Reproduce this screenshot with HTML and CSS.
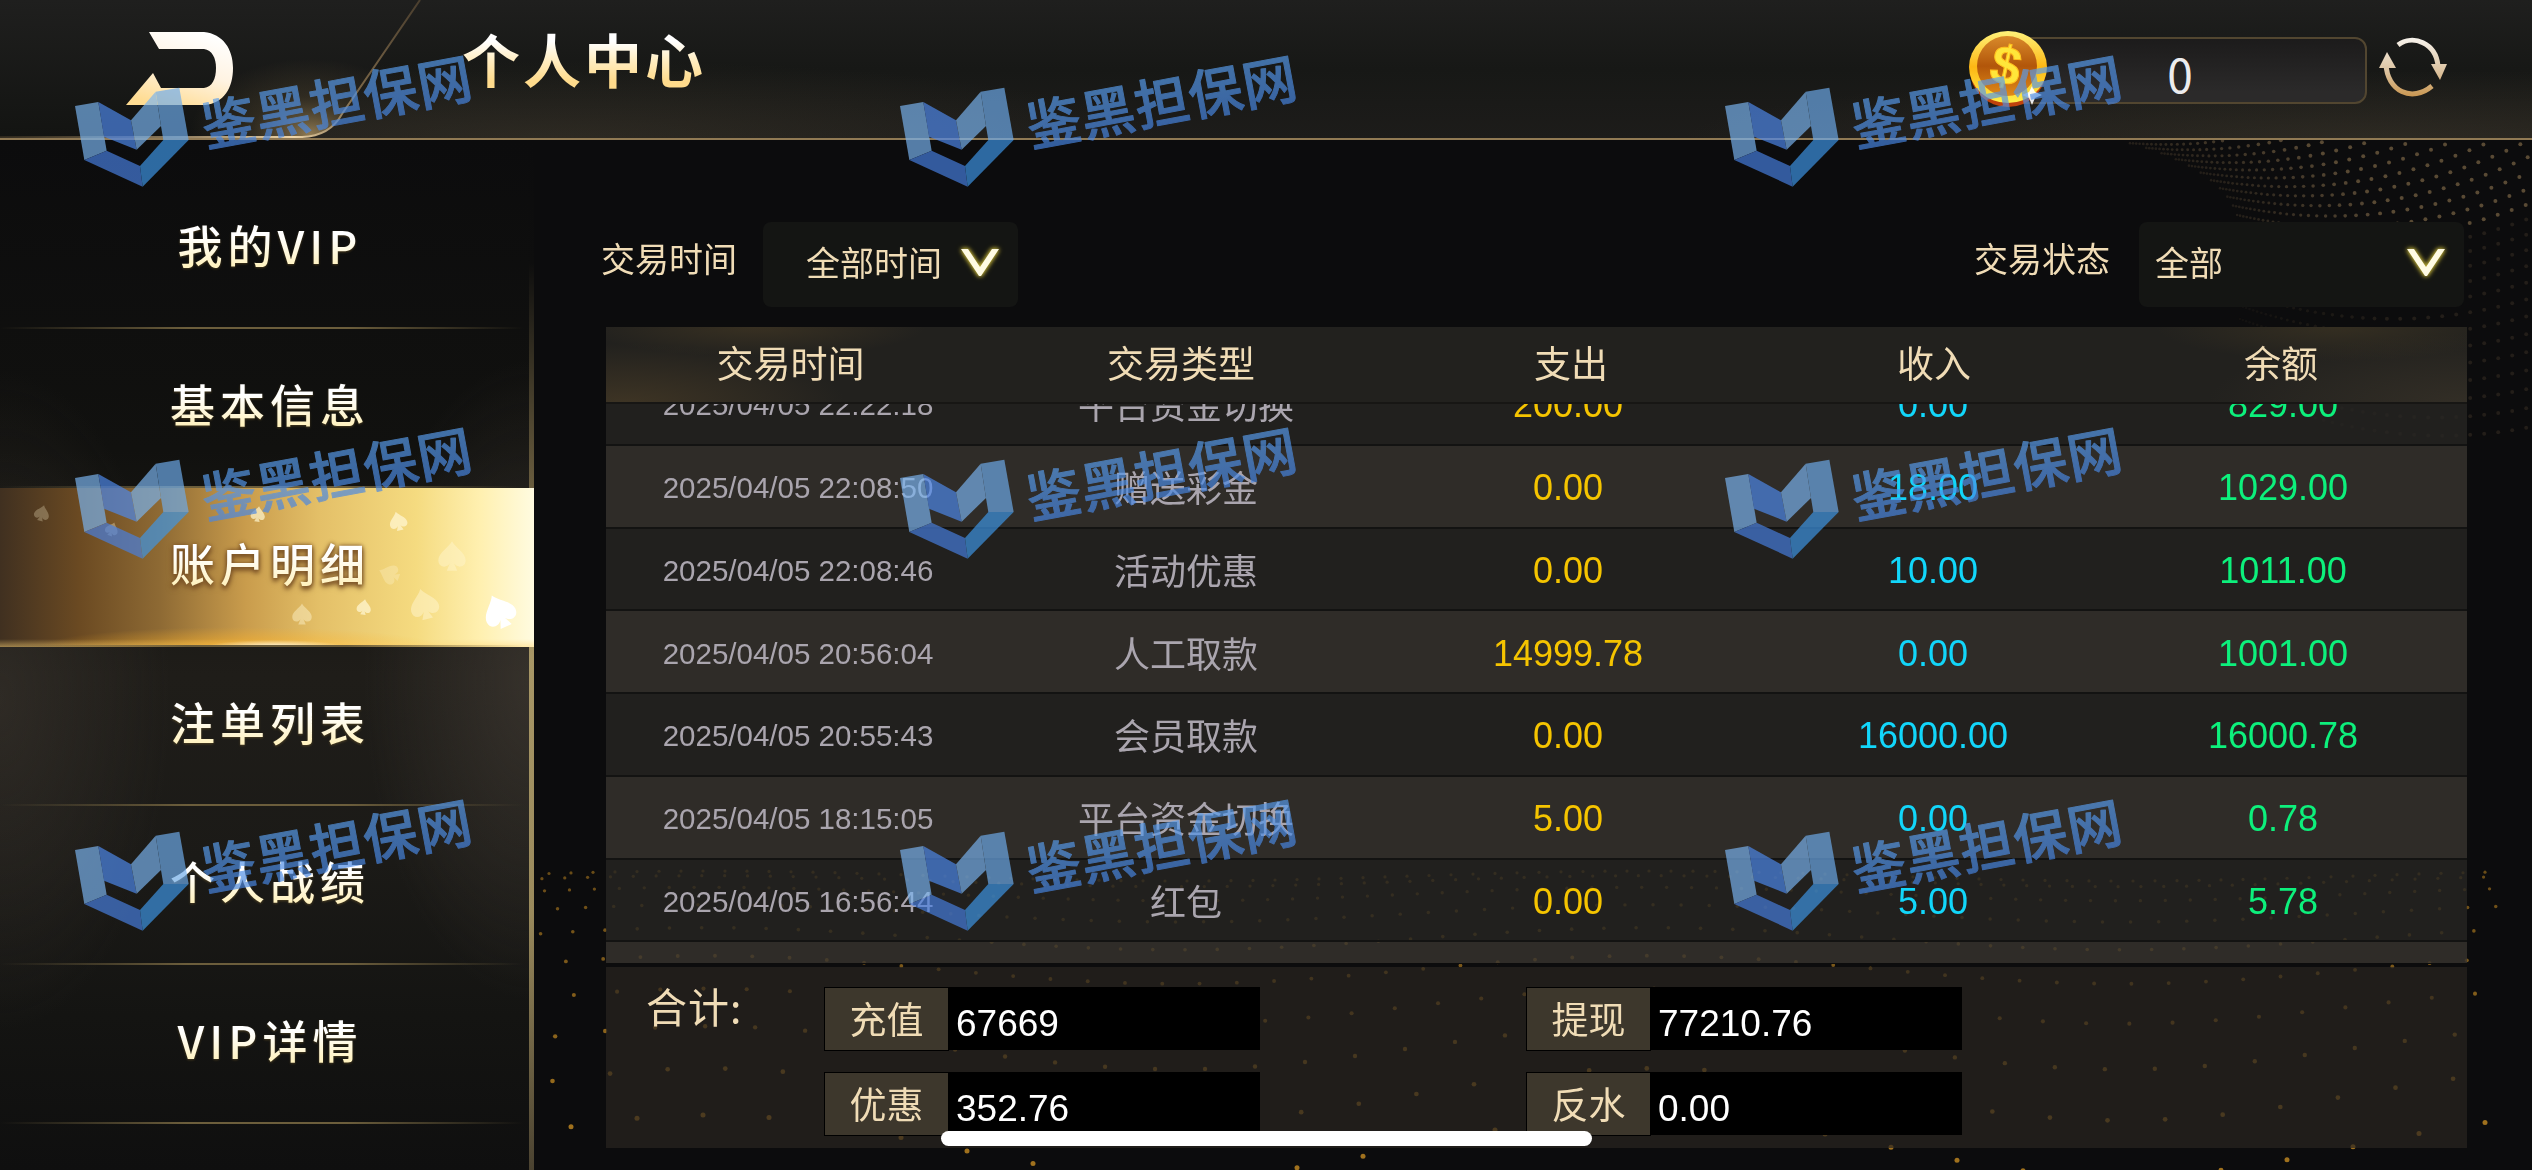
FILE: index.html
```html
<!DOCTYPE html>
<html lang="zh-CN">
<head>
  <meta charset="UTF-8" />
  <meta name="viewport" content="width=device-width, initial-scale=1" />
  <title>个人中心</title>
  <link rel="stylesheet" href="styles.css">
</head>
<body>
  <canvas id="particles" class="particles" width="2532" height="1170"></canvas>

  <header class="header">
    <svg class="header-tab" width="440" height="140" viewBox="0 0 440 140">
      <defs>
        <linearGradient id="tabFill" x1="0" y1="0" x2="0" y2="1">
          <stop offset="0" stop-color="#1f1f1e" />
          <stop offset="1" stop-color="#131412" />
        </linearGradient>
        <linearGradient id="tabLine" x1="0" y1="0" x2="1" y2="0">
          <stop offset="0" stop-color="#6b5636" stop-opacity="0.3" />
          <stop offset="0.7" stop-color="#f0d6a8" />
          <stop offset="0.85" stop-color="#7b6748" />
          <stop offset="1" stop-color="#4a3e2e" />
        </linearGradient>
        <radialGradient id="tabGlow" gradientUnits="userSpaceOnUse" cx="310" cy="134" r="120" gradientTransform="translate(0 50) scale(1 0.63)">
          <stop offset="0" stop-color="#b99c68" stop-opacity="0.75" />
          <stop offset="0.5" stop-color="#6b5a3c" stop-opacity="0.3" />
          <stop offset="1" stop-color="#6b5a3c" stop-opacity="0" />
        </radialGradient>
      </defs>
      <path d="M0 0H420L342 114Q330 136 302 137H0Z" fill="url(#tabFill)" />
      <path d="M0 0H420L342 114Q330 136 302 137H0Z" fill="url(#tabGlow)" />
      <path d="M420 0L342 114Q330 136 302 137H0" fill="none" stroke="url(#tabLine)" stroke-width="2" />
    </svg>
    <button class="back" aria-label="返回">
      <svg width="108" height="74" viewBox="0 0 108 74">
        <defs>
          <linearGradient id="backFill" x1="0.7" y1="0" x2="0.3" y2="1">
            <stop offset="0" stop-color="#ffffff" />
            <stop offset="0.5" stop-color="#fff3e2" />
            <stop offset="1" stop-color="#ffdc92" />
          </linearGradient>
        </defs>
        <path d="M23 0H78C97 2 107 17 107 36C107 56 98 71 79 73H0L27 41L35 56H78C86 55 90 47 90 36C90 26 86 18 78 17H33Z" fill="url(#backFill)" />
      </svg>
    </button>
    <h1 class="title">个人中心</h1>
    <div class="wallet">
      <svg class="coin" width="80" height="78" viewBox="0 0 80 78">
        <defs>
          <linearGradient id="coinRim" x1="0" y1="0" x2="0" y2="1">
            <stop offset="0" stop-color="#fff27a" />
            <stop offset="0.5" stop-color="#fdb714" />
            <stop offset="1" stop-color="#fff04a" />
          </linearGradient>
          <linearGradient id="coinFace" x1="0" y1="0" x2="0" y2="1">
            <stop offset="0" stop-color="#d98a2a" />
            <stop offset="0.5" stop-color="#b2560a" />
            <stop offset="1" stop-color="#e08a18" />
          </linearGradient>
        </defs>
        <ellipse cx="40" cy="40" rx="38" ry="37" fill="#c0420c" />
        <ellipse cx="40" cy="37" rx="39" ry="36" fill="url(#coinRim)" />
        <circle cx="39" cy="36" r="30" fill="url(#coinFace)" />
        <text class="coin-sign" x="38" y="54" transform="rotate(12 38 36)">$</text>
        <path d="M64 56L67 62L74 65L67 68L64 75L61 68L54 65L61 62Z" fill="#fff" opacity="0.9" />
      </svg>
      <span class="amount">0</span>
    </div>
    <button class="refresh" aria-label="刷新">
      <svg width="68" height="62" viewBox="0 0 68 62">
        <defs>
          <linearGradient id="refreshFill" gradientUnits="userSpaceOnUse" x1="0" y1="0" x2="0" y2="62">
            <stop offset="0" stop-color="#f8f4ee" />
            <stop offset="0.55" stop-color="#dcc3a0" />
            <stop offset="1" stop-color="#c8934a" />
          </linearGradient>
        </defs>
        <path d="M19 8C34 -3 57 6 59 29" fill="none" stroke="url(#refreshFill)" stroke-width="5" />
        <path d="M7 27C8 54 33 66 53 49" fill="none" stroke="url(#refreshFill)" stroke-width="5" />
        <path d="M52 27H68L61 43ZM0 31H17L8 15Z" fill="url(#refreshFill)" />
      </svg>
    </button>
  </header>

  <main class="main">
    <nav class="sidebar">
      <a class="nav-item"><span>我的VIP</span></a>
      <a class="nav-item"><span>基本信息</span></a>
      <a class="nav-item active">
        <svg class="spades" width="534" height="157" viewBox="0 0 534 157">
          <defs>
            <path id="spade" d="M0 -14C3 -8 13 -3 13 4C13 11 5 12 2 7L5 14H-5L-2 7C-5 12 -13 11 -13 4C-13 -3 -3 -8 0 -14Z" />
          </defs>
          <g fill="#fff6d0">
            <use href="#spade" transform="translate(42 25) rotate(15) scale(0.58)" opacity="0.28" />
            <use href="#spade" transform="translate(112 41) rotate(20) scale(0.5)" opacity="0.35" />
            <use href="#spade" transform="translate(258 26) rotate(8) scale(0.55)" opacity="0.7" />
            <use href="#spade" transform="translate(398 33) rotate(-14) scale(0.68)" opacity="0.75" />
            <use href="#spade" transform="translate(452 68) scale(1.05)" opacity="0.45" />
            <use href="#spade" transform="translate(389 86) rotate(-70) scale(0.75)" opacity="0.3" />
            <use href="#spade" transform="translate(302 126) scale(0.75)" opacity="0.45" />
            <use href="#spade" transform="translate(364 119) rotate(8) scale(0.55)" opacity="0.75" />
            <use href="#spade" transform="translate(424 116) rotate(-14) scale(1.1)" opacity="0.5" />
          </g>
          <use href="#spade" transform="translate(499 123) rotate(-25) scale(1.22)" fill="#fff" />
        </svg>
        <span>账户明细</span>
      </a>
      <a class="nav-item"><span>注单列表</span></a>
      <a class="nav-item"><span>个人战绩</span></a>
      <a class="nav-item"><span>VIP详情</span></a>
    </nav>

    <section class="content">
      <div class="filters">
        <label class="filter-label">交易时间</label>
        <div class="select select-time">
          <span>全部时间</span>
          <svg class="chevron" width="44" height="34" viewBox="0 0 44 34"><path d="M3 4H10L22 22L34 4H41L23 31H21Z" fill="#fffbe4" /></svg>
        </div>
        <label class="filter-label status-label">交易状态</label>
        <div class="select select-status">
          <span>全部</span>
          <svg class="chevron" width="44" height="34" viewBox="0 0 44 34"><path d="M3 4H10L22 22L34 4H41L23 31H21Z" fill="#fffbe4" /></svg>
        </div>
      </div>

      <div class="table-head">
        <div>交易时间</div>
        <div>交易类型</div>
        <div>支出</div>
        <div>收入</div>
        <div>余额</div>
      </div>
      <div class="table-body">
        <div class="rows" id="rows"></div>
      </div>

      <div class="summary">
        <div class="summary-title">合计:</div>
        <div class="summary-grid">
          <div class="sum"><span class="sum-label">充值</span><span class="sum-value">67669</span></div>
          <div class="sum"><span class="sum-label">提现</span><span class="sum-value">77210.76</span></div>
          <div class="sum"><span class="sum-label">优惠</span><span class="sum-value">352.76</span></div>
          <div class="sum"><span class="sum-label">反水</span><span class="sum-value">0.00</span></div>
        </div>
      </div>
    </section>
  </main>

  <svg class="watermarks" width="2532" height="1170" viewBox="0 0 2532 1170">
    <defs>
      <linearGradient id="markText" x1="0" y1="0" x2="0" y2="1">
        <stop offset="0.2" stop-color="#5a9fee" />
        <stop offset="0.9" stop-color="#4684e2" />
      </linearGradient>
      <g id="mark">
        <g transform="scale(0.3333)">
          <path d="M60 198L130 186L155 332L88 360Z" fill="#7ab4f0" />
          <path d="M130 186L228 241L245 329L147 290Z" fill="#4e8aee" />
          <path d="M228 241L302 155L318 258L245 329Z" fill="#7ab4f0" />
          <path d="M302 155L373 143L401 300H325L318 258Z" fill="#6eacec" />
          <path d="M88 360L155 332L255 378L263 440Z" fill="#4880e2" />
          <path d="M255 378L325 300H401L263 440Z" fill="#3e97e8" />
        </g>
        <text class="mark-text" transform="translate(151 107) rotate(-10.6)" x="0" y="0">鉴黑担保网</text>
      </g>
    </defs>
    <use href="#mark" x="55" y="40" />
    <use href="#mark" x="880" y="40" />
    <use href="#mark" x="1705" y="40" />
    <use href="#mark" x="55" y="412" />
    <use href="#mark" x="880" y="412" />
    <use href="#mark" x="1705" y="412" />
    <use href="#mark" x="55" y="784" />
    <use href="#mark" x="880" y="784" />
    <use href="#mark" x="1705" y="784" />
  </svg>

  <div class="home-indicator"></div>

  <script src="script.js"></script>
</body>
</html>
```

FILE: styles.css
```css
* {
  box-sizing: border-box;
}
body {
  margin: 0;
  width: 2532px;
  height: 1170px;
  overflow: hidden;
  position: relative;
  background: #0c0c0d;
  color: #f0dcb6;
  font-family: "Liberation Sans", "Noto Sans CJK SC", sans-serif;
}
button {
  border: 0;
  padding: 0;
  background: none;
  display: flex;
}
.particles {
  position: absolute;
  top: 0;
  left: 0;
}

/* header */
.header {
  position: relative;
  height: 140px;
  display: flex;
  align-items: flex-start;
  border-bottom: 2px solid #917a54;
  background:
    radial-gradient(ellipse 700px 70px at 2380px 140px, rgba(84, 74, 54, 0.3), transparent),
    radial-gradient(ellipse 600px 80px at 560px 140px, rgba(84, 74, 54, 0.3), transparent),
    linear-gradient(#1f1f1e, #171816 50%, #1d1c1a);
}
.header-tab {
  position: absolute;
  top: 0;
  left: 0;
}
.back {
  position: relative;
  margin: 32px 0 0 126px;
}
.title {
  position: relative;
  margin: 25px 0 0 228px;
  width: 260px;
  font-family: "Noto Sans CJK SC", sans-serif;
  font-size: 58px;
  line-height: 66px;
  font-weight: 700;
  letter-spacing: 3px;
  color: transparent;
  background: linear-gradient(#fff 25%, #ffefc8 50%, #ffdb8c 85%);
  background-clip: text;
  -webkit-background-clip: text;
}
.wallet {
  margin: 37px 0 0 auto;
  width: 358px;
  height: 67px;
  position: relative;
  display: flex;
  justify-content: center;
  padding-right: 16px;
  border: 2px solid #524630;
  border-radius: 12px;
  background: linear-gradient(#1c1b1b, #2b2a2a 85%);
}
.coin {
  position: absolute;
  left: -43px;
  top: -9px;
}
.coin-sign {
  font: bold 54px "Liberation Sans", sans-serif;
  fill: #ffe63a;
  stroke: #ffc01e;
  stroke-width: 1px;
  text-anchor: middle;
}
.amount {
  font-family: "Noto Sans CJK SC", sans-serif;
  font-size: 46px;
  font-weight: 400;
  line-height: 67px;
  margin-top: 1px;
  color: #ececee;
}
.refresh {
  margin: 37px 85px 0 12px;
}

/* layout */
.main {
  position: relative;
  display: flex;
  height: 1030px;
}
.sidebar {
  width: 534px;
  padding-top: 30px;
  border-right: 5px solid;
  border-image: linear-gradient(transparent 12%, #6d6040 35%, #a89766 50%, #9a8a5c 75%, #4a4230) 1;
  background:
    radial-gradient(ellipse 170px 330px at 0 560px, rgba(62, 56, 49, 0.5), transparent),
    radial-gradient(ellipse 170px 320px at 534px 540px, rgba(64, 58, 51, 0.7), transparent),
    linear-gradient(#0c0c0d, #11110f 30%, #1f1d19 52%, #1b1a17 70%, #141412 85%, #0f0f0f);
}
.nav-item {
  position: relative;
  width: 534px;
  height: 159px;
  display: flex;
  align-items: center;
  justify-content: center;
  padding-bottom: 9px;
}
.nav-item::after {
  content: "";
  position: absolute;
  left: 0;
  right: 0;
  bottom: 0;
  height: 2px;
  background: linear-gradient(90deg, transparent, #6c5e3c 35%, #6c5e3c 65%, transparent 98%);
}
.nav-item span {
  position: relative;
  padding-left: 6px;
  font-family: "Noto Sans CJK SC", sans-serif;
  font-size: 45px;
  line-height: 60px;
  font-weight: 500;
  letter-spacing: 5px;
  color: transparent;
  background: linear-gradient(#fff 35%, #fff2c0 85%);
  background-clip: text;
  -webkit-background-clip: text;
  filter: drop-shadow(0 1px 1px rgba(190, 150, 60, 0.3));
}
.nav-item.active {
  background:
    radial-gradient(ellipse 70px 7px at 275px 100%, #fffbe8, transparent),
    radial-gradient(ellipse 200px 20px at 240px 100%, rgba(255, 180, 40, 0.65), transparent),
    linear-gradient(transparent 95%, rgba(255, 214, 120, 0.5)),
    linear-gradient(90deg, #403020, #6b4a22 15%, #8e6a34 30%, #c99c4c 46%, #e4c068 60%, #f5db80 78%, #fff0b0 90%, #fffbe0);
}
.nav-item.active span {
  filter: drop-shadow(0 0 2px #7a5226) drop-shadow(0 3px 2px #7a5226);
}
.spades {
  position: absolute;
  top: 0;
  left: 0;
}

.content {
  width: 1861px;
  margin-left: 72px;
}
.filters {
  display: flex;
  padding-top: 82px;
  height: 187px;
}
.filter-label {
  width: 162px;
  margin-left: -5px;
  padding-top: 12px;
  font-size: 34px;
  line-height: 52px;
}
.status-label {
  margin-left: auto;
  width: 165px;
}
.select {
  display: flex;
  align-items: center;
  height: 85px;
  padding-bottom: 6px;
  border-radius: 8px;
  background: #141513;
  font-size: 34px;
}
.select-time {
  width: 255px;
  padding-left: 43px;
  gap: 16px;
}
.select-status {
  width: 325px;
  margin-right: 3px;
  padding: 0 16px 6px 16px;
  justify-content: space-between;
}
.chevron {
  filter: drop-shadow(0 0 2px #c8b83a) drop-shadow(0 0 2px #8f832a);
}

/* transactions */
.table-head {
  display: grid;
  grid-template-columns: 369px 412px 368px 358px 336px;
  height: 77px;
  line-height: 78px;
  text-align: center;
  font-size: 37px;
  border-bottom: 2px solid #171614;
  background:
    radial-gradient(ellipse 170px 30px at 150px 0, rgba(90, 72, 40, 0.4), transparent),
    radial-gradient(ellipse 220px 60px at 20px 77px, rgba(96, 76, 44, 0.45), transparent),
    radial-gradient(ellipse 180px 34px at 1730px 0, rgba(80, 66, 38, 0.4), transparent),
    radial-gradient(ellipse 260px 70px at 1861px 77px, rgba(76, 66, 50, 0.4), transparent),
    #22211e;
}
.table-body {
  height: 560px;
  overflow: hidden;
  display: flex;
  align-items: flex-end;
  border-bottom: 1px solid #0c0c0c;
}
.rows {
  width: 1861px;
  height: 600px;
  overflow: hidden;
}
.row {
  display: grid;
  grid-template-columns: 384px 392px 372px 358px 342px;
  height: 82.75px;
  align-items: center;
  text-align: center;
  font-size: 36px;
  background: rgba(39, 37, 35, 0.8);
  border-bottom: 2px solid #131312;
}
.row:nth-child(even) {
  background: rgba(56, 52, 47, 0.8);
}
.time {
  font-size: 29.5px;
  padding-top: 4px;
  color: #aaa5ae;
}
.type {
  color: #aaa5ae;
}
.out {
  padding-top: 4px;
  color: #f5c400;
}
.in {
  padding-top: 4px;
  color: #12d6fa;
}
.balance {
  padding-top: 4px;
  color: #0df07c;
}

/* totals */
.summary {
  display: flex;
  height: 181px;
  margin-top: 3px;
  background: rgba(42, 37, 33, 0.7);
}
.summary-title {
  width: 218px;
  padding: 10px 0 0 40px;
  font-family: "Noto Sans CJK SC", sans-serif;
  font-size: 41px;
  line-height: 56px;
  letter-spacing: 1px;
}
.summary-grid {
  display: grid;
  grid-template-columns: 702px 436px;
  grid-template-rows: 64px 64px;
  row-gap: 21px;
  padding-top: 20px;
}
.sum {
  display: flex;
  height: 64px;
  width: 436px;
  line-height: 67px;
}
.sum-label {
  width: 125px;
  text-align: center;
  font-size: 37px;
  border: 1px solid #000;
  background: #3d372c;
}
.sum-value {
  flex: 1;
  height: 63px;
  padding-left: 7px;
  padding-top: 3px;
  font-size: 37px;
  color: #fff;
  background: #000;
}

.watermarks {
  position: absolute;
  top: 0;
  left: 0;
  opacity: 0.68;
  pointer-events: none;
}
.mark-text {
  font-family: "Noto Sans CJK SC", sans-serif;
  font-size: 54px;
  font-weight: 500;
  letter-spacing: 0.8px;
  fill: url(#markText);
  stroke: url(#markText);
  stroke-width: 1px;
  stroke-linejoin: round;
}
.home-indicator {
  position: absolute;
  left: 941px;
  top: 1131px;
  width: 651px;
  height: 15px;
  border-radius: 8px;
  background: #fff;
}
```

FILE: script.js
```js
const records = [
  ['2025/04/05 22:22:18', '平台资金切换', '200.00', '0.00', '829.00'],
  ['2025/04/05 22:08:50', '赠送彩金', '0.00', '18.00', '1029.00'],
  ['2025/04/05 22:08:46', '活动优惠', '0.00', '10.00', '1011.00'],
  ['2025/04/05 20:56:04', '人工取款', '14999.78', '0.00', '1001.00'],
  ['2025/04/05 20:55:43', '会员取款', '0.00', '16000.00', '16000.78'],
  ['2025/04/05 18:15:05', '平台资金切换', '5.00', '0.00', '0.78'],
  ['2025/04/05 16:56:44', '红包', '0.00', '5.00', '5.78'],
  ['', '', '', '', '']
];
const classes = ['time', 'type', 'out', 'in', 'balance'];
const rows = document.getElementById('rows');

records.forEach(record => {
  const row = document.createElement('div');
  row.className = 'row';
  record.forEach((text, i) => {
    const cell = document.createElement('div');
    cell.className = classes[i];
    cell.textContent = text;
    row.appendChild(cell);
  });
  rows.appendChild(row);
});

// Dotted waves behind the panels
const ctx = document.getElementById('particles').getContext('2d');

function dot(x, y, r, color, alpha) {
  ctx.globalAlpha = alpha;
  ctx.fillStyle = color;
  ctx.beginPath();
  ctx.arc(x, y, r, 0, Math.PI * 2);
  ctx.fill();
}

// top right: strands start on a curved edge and open to the right
for (let k = 0; k < 30; k++) {
  const t = k / 15;
  const sx = 2040 + 200 * Math.sin(Math.min(t, 1.1) * 1.4);
  const sy = 130 + 85 * Math.pow(t, 1.7);
  let d = 0;
  let step = 3;
  while (sx + d < 2532) {
    const y = sy + 0.23 * t * d - 0.0011 * d * d;
    if (y > 140 && y < 560) {
      const near = Math.min(1, d / 150);
      const fade = t > 1.1 ? 0.3 : 1;
      dot(sx + d, y, 1.3 + near * 0.7, '#a5875c', (0.15 + 0.35 * near) * fade);
    }
    d += step;
    step = Math.min(14, step * 1.07);
  }
}

// bottom: floor of dots in perspective
for (let i = 0; i < 10; i++) {
  const depth = Math.pow(i / 9, 1.8);
  const spacing = 22 + depth * 44;
  for (let j = -60; j < 60; j++) {
    const x = 1330 + (j + 0.5) * spacing;
    if (x < 500 || x > 2500) continue;
    const wave = Math.sin(x / 150) * (5 + depth * 26);
    const y = 876 + depth * 270 + wave;
    dot(x, y, 1.6 + depth * 0.9, '#c58b22', 0.5 + 0.3 * depth);
  }
}
```
